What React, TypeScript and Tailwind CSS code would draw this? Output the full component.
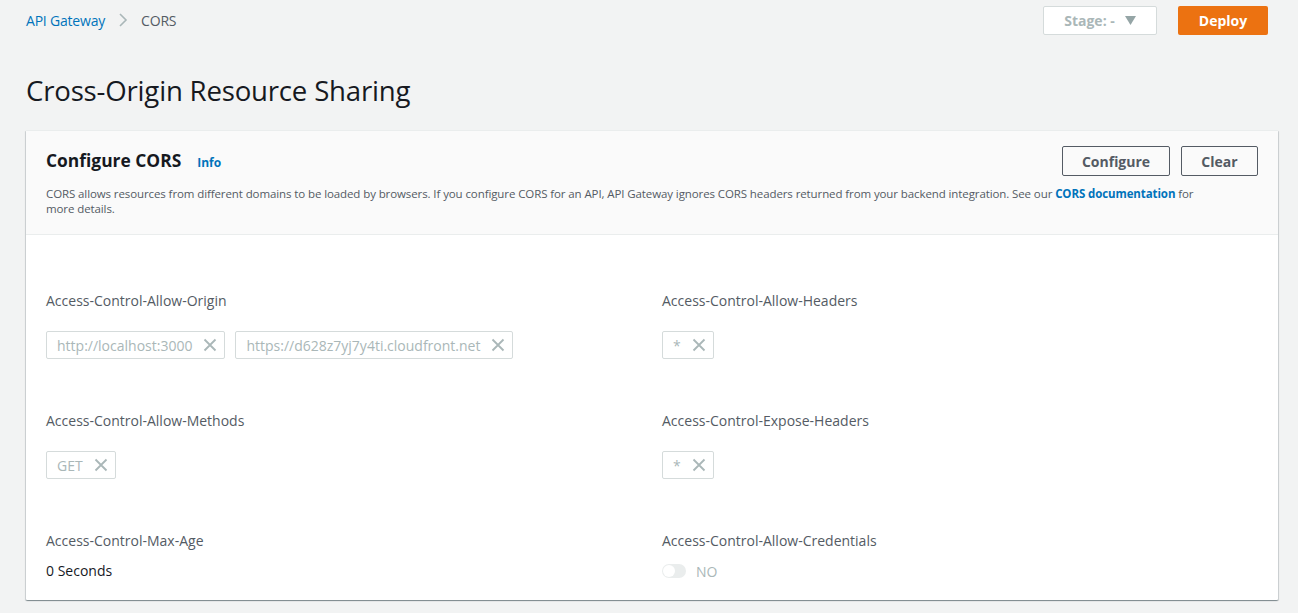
import React from "react";

const X = () => (
  <svg width="14" height="14" viewBox="0 0 14 14" className="shrink-0">
    <path d="M1.5 1.5 L12.5 12.5 M12.5 1.5 L1.5 12.5" stroke="#aab7b8" strokeWidth="1.8" fill="none" />
  </svg>
);

const Token = ({ text }: { text: string }) => (
  <div className="h-[28px] border border-[#d5dbdb] bg-white rounded-[2px] flex items-center pl-[10px] pr-[7px] gap-[11px] text-[14px] text-[#aab7b8]">
    <span>{text}</span>
    <X />
  </div>
);

const Label = ({ children }: { children: React.ReactNode }) => (
  <div className="text-[14px] text-[#545b64] leading-[20px]">{children}</div>
);

export default function App() {
  return (
    <div className="min-h-[613px] bg-[#f2f3f3] text-[#16191f]" style={{ fontFamily: '"Open Sans", "Noto Sans", sans-serif' }}>
      <div className="px-[26px]">
        <div className="h-[40px] flex items-center justify-between">
          <div className="flex items-center text-[14px] tracking-[-0.2px]">
            <span className="text-[#0073bb]">API Gateway</span>
            <svg width="12" height="14" viewBox="0 0 12 14" className="mx-[12px]">
              <path d="M3 1 L9 7 L3 13" stroke="#aab7b8" strokeWidth="1.6" fill="none" />
            </svg>
            <span className="text-[#545b64]">CORS</span>
          </div>
          <div className="flex items-center gap-[21px] pr-[4px]">
            <div className="w-[114px] h-[29px] bg-white border border-[#d5dbdb] rounded-[2px] flex items-center justify-center gap-[10px] text-[14px] font-bold text-[#aab7b8]">
              <span>Stage: -</span>
              <svg width="11" height="9" viewBox="0 0 11 9"><path d="M0 0 H11 L5.5 9 Z" fill="#95a5a6" /></svg>
            </div>
            <div className="w-[90px] h-[29px] bg-[#ec7211] rounded-[2px] flex items-center justify-center text-[14px] font-bold text-white">Deploy</div>
          </div>
        </div>
        <h1 className="mt-[28px] text-[27.6px] leading-[44px] text-[#16191f] font-normal tracking-[-0.2px]">Cross-Origin Resource Sharing</h1>
        <div className="mt-[18px] w-[1252px] bg-white rounded-[1px] shadow-[0_1px_1px_0_rgba(0,28,36,0.3),1px_1px_1px_0_rgba(0,28,36,0.15),-1px_1px_1px_0_rgba(0,28,36,0.15)] border-t border-[#eaeded]">
          <div className="bg-[#fafafa] border-b border-[#eaeded] px-[20px] pt-[15px] pb-[18px]">
            <div className="flex items-start justify-between">
              <div className="flex items-baseline gap-[16px] pt-[2px]">
                <span className="text-[17.4px] font-bold leading-[24px]">Configure CORS</span>
                <span className="text-[12px] font-bold text-[#0073bb]">Info</span>
              </div>
              <div className="flex gap-[11px]">
                <div className="w-[108px] h-[30px] border border-[#545b64] rounded-[2px] flex items-center justify-center text-[14px] font-bold text-[#545b64]">Configure</div>
                <div className="w-[77px] h-[30px] border border-[#545b64] rounded-[2px] flex items-center justify-center text-[14px] font-bold text-[#545b64]">Clear</div>
              </div>
            </div>
            <p className="mt-[10px] text-[11.5px] leading-[15px] text-[#545b64] pr-[40px] tracking-[-0.1px]">
              <span>CORS allows resources from different domains to be loaded by browsers. If you configure CORS for an API, API Gateway ignores CORS headers returned from your backend integration. See our </span>
              <span className="font-bold text-[#0073bb]">CORS documentation</span>
              <span> for</span>
              <br />
              <span>more details.</span>
            </p>
          </div>
          <div className="grid grid-cols-[616px_1fr] px-[20px] pt-[56px] pb-[19px] gap-y-[52px]">
            <div>
              <Label>Access-Control-Allow-Origin</Label>
              <div className="mt-[20px] flex gap-[10px]">
                <Token text="http://localhost:3000" />
                <Token text="https://d628z7yj7y4ti.cloudfront.net" />
              </div>
            </div>
            <div>
              <Label>Access-Control-Allow-Headers</Label>
              <div className="mt-[20px] flex"><Token text="*" /></div>
            </div>
            <div>
              <Label>Access-Control-Allow-Methods</Label>
              <div className="mt-[20px] flex"><Token text="GET" /></div>
            </div>
            <div>
              <Label>Access-Control-Expose-Headers</Label>
              <div className="mt-[20px] flex"><Token text="*" /></div>
            </div>
            <div>
              <Label>Access-Control-Max-Age</Label>
              <div className="mt-[10px] text-[14px] leading-[20px] text-[#16191f]">0 Seconds</div>
            </div>
            <div>
              <Label>Access-Control-Allow-Credentials</Label>
              <div className="mt-[10px] flex items-center gap-[10px] h-[20px]">
                <div className="w-[24px] h-[14px] rounded-full bg-[#eaeded] relative">
                  <div className="absolute left-[1px] top-[1px] w-[12px] h-[12px] rounded-full bg-white" />
                </div>
                <span className="text-[14px] text-[#aab7b8]">NO</span>
              </div>
            </div>
          </div>
        </div>
      </div>
    </div>
  );
}
